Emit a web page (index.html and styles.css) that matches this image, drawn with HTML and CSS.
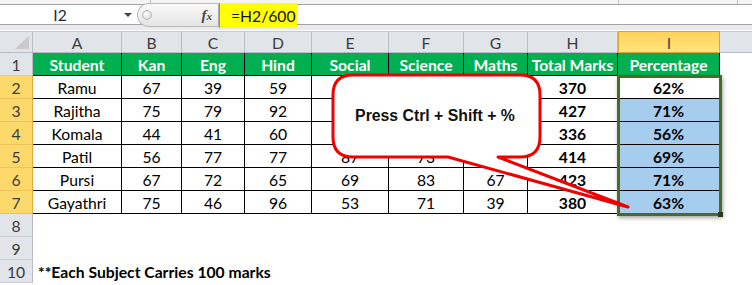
FILE: index.html
```html
<!DOCTYPE html>
<html>
<head>
<meta charset="utf-8">
<link rel="stylesheet" href="styles.css">
</head>
<body>
<div class="app">
  <div class="fbar">
    <div class="topstrip"><span class="tick t1"></span><span class="tick t2"></span><span class="tick t3"></span></div>
    <div class="frow">
      <div class="namebox"><span class="ref">I2</span><span class="dd"></span></div>
      <div class="split"><span class="knob"></span><span class="fx">f<span class="fxx">x</span></span></div>
      <div class="formula"></div>
    </div>
    <div class="fgap"></div>
  </div>

  <div class="sheet">
    <div class="ch corner"><svg width="16" height="14" viewBox="0 0 16 14"><polygon points="15,0 15,13 1,13" fill="#c9c9c9"/></svg></div>
    <div class="ch">A</div><div class="ch">B</div><div class="ch">C</div><div class="ch">D</div><div class="ch">E</div><div class="ch">F</div><div class="ch">G</div><div class="ch">H</div><div class="ch chsel">I</div><div class="ch chrest"></div>

    <div class="rh">1</div>
    <div class="c hd">Student</div><div class="c hd">Kan</div><div class="c hd">Eng</div><div class="c hd">Hind</div><div class="c hd">Social</div><div class="c hd">Science</div><div class="c hd">Maths</div><div class="c hd">Total Marks</div><div class="c hd">Percentage</div><div class="rest"></div>

    <div class="rh rhsel">2</div>
    <div class="c">Ramu</div><div class="c">67</div><div class="c">39</div><div class="c">59</div><div class="c"></div><div class="c"></div><div class="c"></div><div class="c b">370</div><div class="c b">62%</div><div class="rest"></div>

    <div class="rh rhsel">3</div>
    <div class="c">Rajitha</div><div class="c">75</div><div class="c">79</div><div class="c">92</div><div class="c"></div><div class="c"></div><div class="c"></div><div class="c b">427</div><div class="c b pc">71%</div><div class="rest"></div>

    <div class="rh rhsel">4</div>
    <div class="c">Komala</div><div class="c">44</div><div class="c">41</div><div class="c">60</div><div class="c"></div><div class="c"></div><div class="c"></div><div class="c b">336</div><div class="c b pc">56%</div><div class="rest"></div>

    <div class="rh rhsel">5</div>
    <div class="c">Patil</div><div class="c">56</div><div class="c">77</div><div class="c">77</div><div class="c">87</div><div class="c">73</div><div class="c"></div><div class="c b">414</div><div class="c b pc">69%</div><div class="rest"></div>

    <div class="rh rhsel">6</div>
    <div class="c">Pursi</div><div class="c">67</div><div class="c">72</div><div class="c">65</div><div class="c">69</div><div class="c">83</div><div class="c">67</div><div class="c b">423</div><div class="c b pc">71%</div><div class="rest"></div>

    <div class="rh rhsel">7</div>
    <div class="c">Gayathri</div><div class="c">75</div><div class="c">46</div><div class="c">96</div><div class="c">53</div><div class="c">71</div><div class="c">39</div><div class="c b">380</div><div class="c b pc">63%</div><div class="rest"></div>

    <div class="rh">8</div><div class="blank"></div>
    <div class="rh">9</div><div class="blank"></div>
    <div class="rh">10</div><div class="blank note">**Each Subject Carries 100 marks</div>
  </div>

  <div class="hl">=H2/600</div>
  <div class="selbox"></div>
  <div class="handle"></div>
  <svg class="callout" width="752" height="285" viewBox="0 0 752 285">
    <path d="M353,75 H520 Q540,75 540,95 V137 Q540,157 520,157 H498 L628,207 L448,157 H353 Q333,157 333,137 V95 Q333,75 353,75 Z" fill="#ffffff" stroke="#f00000" stroke-width="3" stroke-linejoin="round"/>
  </svg>
  <div class="ctext">Press Ctrl + Shift + %</div>
</div>
</body>
</html>
```

FILE: styles.css
```css
* { box-sizing: border-box; }
html, body { margin: 0; padding: 0; background: #fff; }
body { width: 752px; height: 285px; overflow: hidden; }

.app {
  position: relative;
  width: 752px;
  height: 285px;
  font-family: Lato, "Open Sans", sans-serif;
  font-size: 15.7px;
  color: #000;
}

/* formula bar */
.fbar { display: flex; flex-direction: column; height: 31px; }
.topstrip {
  position: relative;
  height: 5px;
  background: #f4f4f4;
  border-bottom: 1px solid #a3a3a3;
}
.tick { position: absolute; top: 0; width: 1px; height: 4px; background: #c4c4c4; }
.t1 { left: 150px; } .t2 { left: 618px; } .t3 { left: 737px; }
.frow { display: flex; height: 20px; background: #fff; border-bottom: 1px solid #a3a3a3; }
.namebox {
  width: 137px;
  display: flex;
  align-items: center;
  position: relative;
}
.ref { width: 120px; text-align: center; color: #1a2a44; font-size: 15.7px; padding-top: 1px; }
.dd {
  position: absolute; left: 124px; top: 8px;
  width: 0; height: 0;
  border-left: 4px solid transparent; border-right: 4px solid transparent;
  border-top: 4px solid #444;
}
.split {
  width: 82px;
  height: 24px;
  margin-top: -2px;
  border-radius: 13px 0 0 13px;
  background: linear-gradient(#fbfbfb, #e4e4e4);
  border: 1px solid #b9b9b9;
  border-right: 1px solid #a8a8a8;
  display: flex;
  align-items: center;
  position: relative;
  z-index: 1;
}
.knob {
  width: 10px; height: 10px; border-radius: 50%;
  margin-left: 4px;
  background: radial-gradient(circle at 40% 40%, #fff, #cfcfcf);
  border: 1px solid #b8b8b8;
}
.fx {
  margin-left: auto;
  margin-right: 6px;
  font-family: "Liberation Serif", serif;
  font-style: italic;
  font-weight: bold;
  font-size: 15px;
  color: #4a4a4a;
}
.fxx { font-size: 11px; }
.formula { flex: 1; }
.fgap { height: 5px; background: #e9ebee; }

/* sheet */
.sheet {
  display: grid;
  grid-template-columns: 33px 89px 60px 63px 67px 77px 75px 64px 90px 102px 1fr;
  grid-template-rows: 22px repeat(10, 23px);
}
.ch {
  background: #e1e4e9;
  border-right: 1px solid #b7bcc4;
  border-bottom: 1px solid #b7bcc4;
  border-top: 1px solid #c6cad0;
  color: #3c3c3c;
  display: flex; align-items: center; justify-content: center;
  padding-top: 1px;
}
.corner { align-items: flex-end; justify-content: flex-end; padding: 0 2px 2px 0; }
.chsel {
  background: linear-gradient(#ffd25a, #ffe57d);
  border: 1px solid #e0a232;
  color: #444;
}
.chrest { border-right: none; }

.rh {
  background: #e1e4e9;
  border-right: 1px solid #b7bcc4;
  border-bottom: 1px solid #c9ccd2;
  color: #3c3c3c;
  display: flex; align-items: center; justify-content: center;
  padding-top: 1px;
}
.rhsel {
  background: #fdd86b;
  border-right: 1px solid #e3a93a;
  border-bottom: 1px solid #f0c45a;
}

.c {
  border-right: 1px solid #000;
  border-bottom: 1px solid #000;
  display: flex; align-items: center; justify-content: center;
  padding-top: 1px;
  white-space: nowrap;
}
.hd { background: #00b050; color: #fff; font-weight: bold; }
.b { font-weight: bold; }
.pc { background: #a6cdee; }
.blank { grid-column: 2 / span 10; }
.note {
  font-weight: bold;
  display: flex; align-items: center;
  padding-left: 5px; padding-top: 1px;
}

/* overlays */
.hl {
  position: absolute;
  left: 219px; top: 3px;
  width: 78px; height: 25px;
  background: #ffff00;
  border-left: 1px solid #9b9b50;
  display: flex; align-items: center;
  padding-left: 11px;
  font-size: 15.7px;
  color: #111;
}
.selbox {
  position: absolute;
  left: 617px; top: 75px;
  width: 105px; height: 141px;
  border: 3px solid #4a6a2a;
  box-shadow: 1px 2px 4px rgba(0,0,0,0.35);
}
.handle {
  position: absolute;
  left: 718px; top: 212px;
  width: 5px; height: 5px;
  background: #2b3a1c;
}
.callout { position: absolute; left: 0; top: 0; pointer-events: none; }
.ctext {
  position: absolute;
  left: 333px; top: 75px;
  width: 204px; height: 82px;
  display: flex; align-items: center; justify-content: center;
  font-family: "Liberation Sans", Arial, sans-serif;
  font-weight: bold;
  font-size: 15.8px;
  color: #111;
}
```
